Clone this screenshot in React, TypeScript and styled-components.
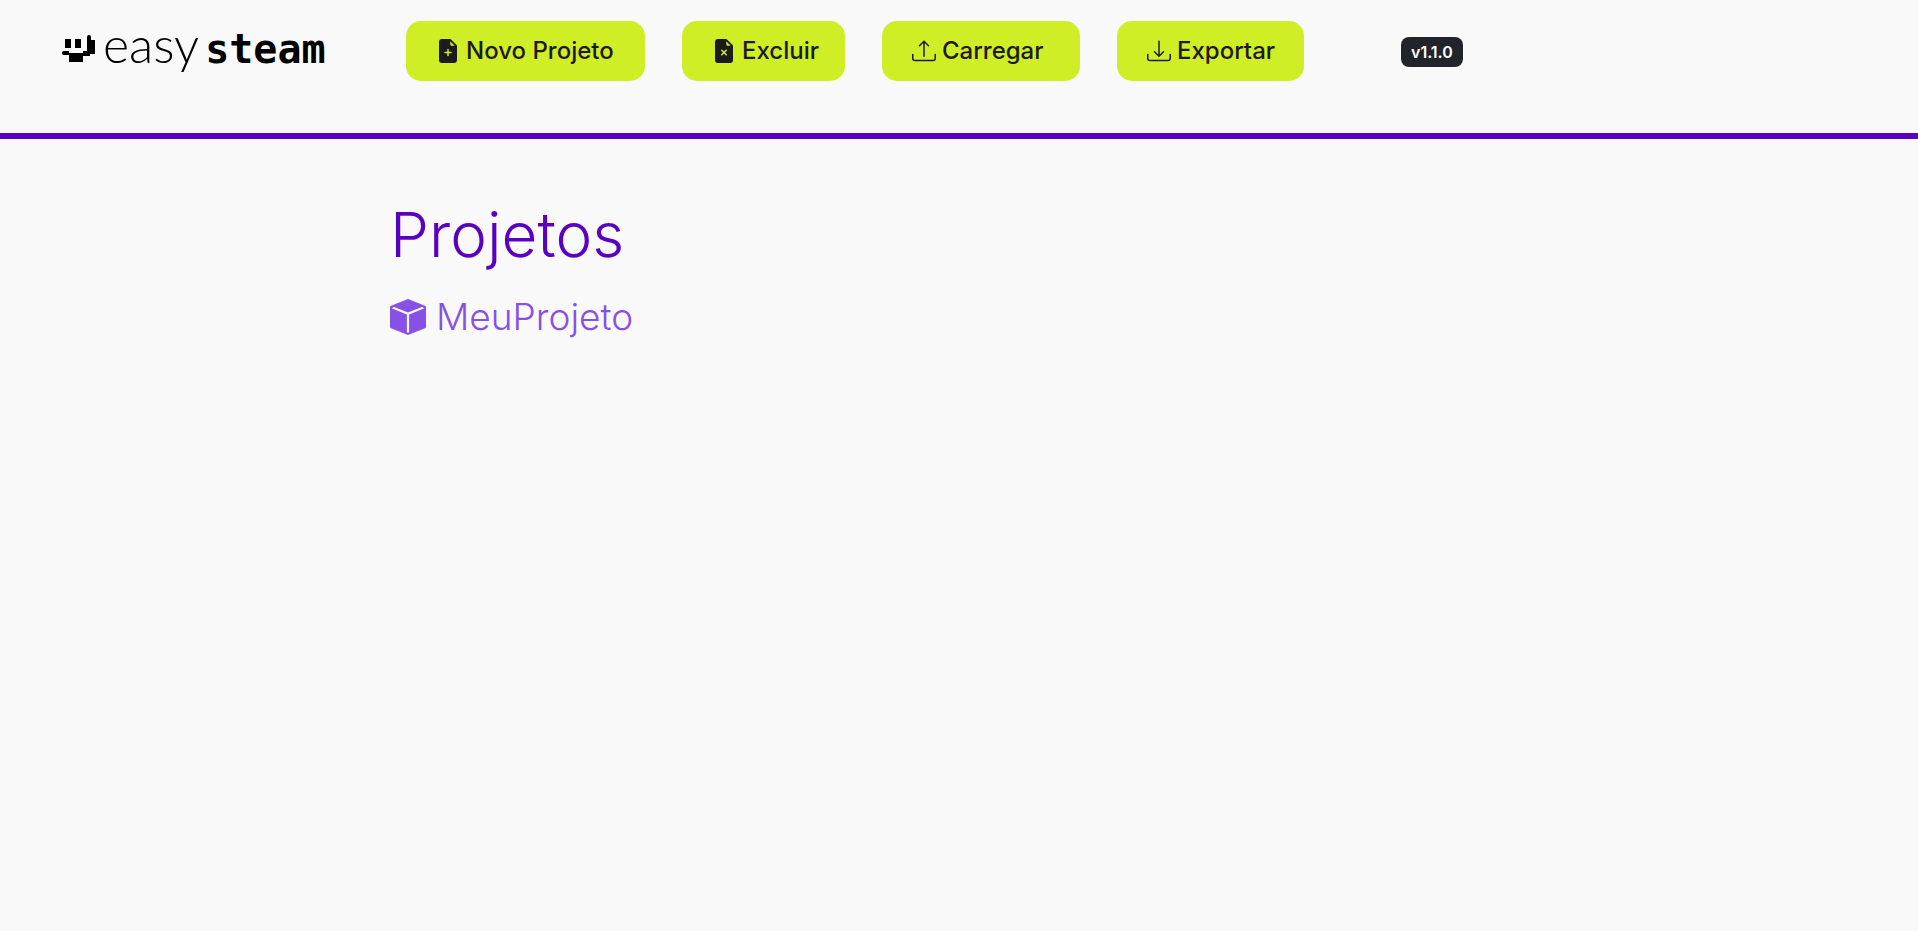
import React from "react";
import styled, { createGlobalStyle } from "styled-components";
import {
  BsBoxFill,
  BsDownload,
  BsFileEarmarkPlusFill,
  BsFileEarmarkXFill,
  BsUpload,
} from "react-icons/bs";

const GlobalStyle = createGlobalStyle`
  *, *::before, *::after { box-sizing: border-box; }
  body {
    margin: 0;
    background: #f9f9f9;
    color: #1d1a1b;
    font-family: Inter, "Open Sans", sans-serif;
  }
`;

const Header = styled.header`
  display: flex;
  align-items: flex-start;
  min-height: 139px;
  padding: 21px 62px;
  border-bottom: 6px solid #5a00c0;
`;

const Brand = styled.a`
  display: flex;
  align-items: center;
  flex: none;
  width: 344px;
  height: 56px;
  color: #000;
  text-decoration: none;
  white-space: nowrap;
`;

const BrandMark = styled.svg`
  flex: none;
  width: 34px;
  height: 28px;
`;

const BrandName = styled.span`
  display: flex;
  align-items: baseline;
  gap: 6px;
  margin-left: 7px;
  padding-bottom: 6px;
`;

const BrandLight = styled.span`
  font: 300 50px/56px Lato, sans-serif;
`;

const BrandHeavy = styled.span`
  font: 700 40px/56px "DejaVu Sans Mono", monospace;
`;

const Actions = styled.nav`
  display: flex;
  flex: none;
  gap: 37px;
`;

const ActionButton = styled.button<{ $width: number }>`
  display: flex;
  align-items: center;
  gap: 6px;
  min-width: ${({ $width }) => $width}px;
  height: 60px;
  padding: 0 24px 0 30px;
  border: 0;
  border-radius: 15px;
  background: #d0ee26;
  color: #1d1a1b;
  font: 500 24px/36px Inter, sans-serif;
  white-space: nowrap;
  cursor: pointer;

  svg {
    flex: none;
    width: 24px;
    height: 24px;
  }
`;

const Version = styled.span`
  margin: 16px 0 0 97px;
  padding: 0 10px;
  border-radius: 8px;
  background: #212529;
  color: #fff;
  font: 600 16px/30px Inter, sans-serif;
`;

const Main = styled.main`
  padding: 60px 390px;
`;

const Title = styled.h1`
  margin: 0;
  color: #5a00c0;
  font: 300 62px/72px Inter, sans-serif;
`;

const ProjectList = styled.ul`
  margin: 22px 0 0;
  padding: 0;
  list-style: none;
`;

const ProjectLink = styled.a`
  display: inline-flex;
  align-items: center;
  gap: 10px;
  color: #8750e6;
  font: 300 37px/48px Inter, sans-serif;
  text-decoration: none;

  svg {
    flex: none;
    width: 36px;
    height: 36px;
  }
`;

const actions = [
  { label: "Novo Projeto", Icon: BsFileEarmarkPlusFill, width: 239 },
  { label: "Excluir", Icon: BsFileEarmarkXFill, width: 163 },
  { label: "Carregar", Icon: BsUpload, width: 198 },
  { label: "Exportar", Icon: BsDownload, width: 187 },
];

export default function App() {
  return (
    <>
      <GlobalStyle />
      <Header>
        <Brand href="#">
          <BrandMark viewBox="0 0 34 28" aria-hidden="true">
            <path d="M3 4H9V13H3ZM13 4H19V13H13Z" />
            <path d="M2 16H7V18H21V16H25V2A2 2 0 0 1 29 2V5H33V19H28V21H21V27H7V20H2A2 2 0 0 1 2 16Z" />
          </BrandMark>
          <BrandName>
            <BrandLight>easy</BrandLight>
            <BrandHeavy>steam</BrandHeavy>
          </BrandName>
        </Brand>
        <Actions>
          {actions.map(({ label, Icon, width }) => (
            <ActionButton key={label} type="button" $width={width}>
              <Icon aria-hidden="true" />
              {label}
            </ActionButton>
          ))}
        </Actions>
        <Version>v1.1.0</Version>
      </Header>
      <Main>
        <Title>Projetos</Title>
        <ProjectList>
          <li>
            <ProjectLink href="#">
              <BsBoxFill aria-hidden="true" />
              MeuProjeto
            </ProjectLink>
          </li>
        </ProjectList>
      </Main>
    </>
  );
}
